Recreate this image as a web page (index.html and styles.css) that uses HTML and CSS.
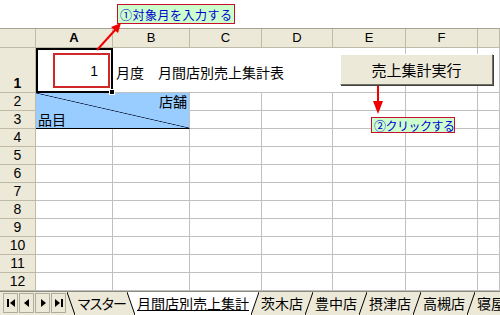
FILE: index.html
```html
<!DOCTYPE html>
<html lang="ja">
<head>
    <meta charset="UTF-8">
    <title>月間店別売上集計</title>
    <link rel="stylesheet" href="styles.css">
</head>
<body>
    <div class="top"></div>

    <!-- Sheet grid -->
    <div class="sheet">
        <div class="ch"></div><div class="ch on">A</div><div class="ch">B</div><div class="ch">C</div><div class="ch">D</div><div class="ch">E</div><div class="ch">F</div><div class="ch"></div>

        <div class="rh on">1</div>
        <div class="c a1"><div class="box">1</div></div>
        <div class="c title">月度　月間店別売上集計表</div>
        <div class="c"></div><div class="c"></div><div class="c"></div>

        <div class="rh">2</div>
        <div class="c diag"><span class="shop">店舗</span><span class="item">品目</span></div>
        <div class="c"></div><div class="c"></div><div class="c"></div><div class="c"></div><div class="c"></div>

        <div class="rh">3</div>
        <div class="c"></div><div class="c"></div><div class="c"></div><div class="c"></div><div class="c"></div>

        <div class="rh">4</div><div class="c"></div><div class="c"></div><div class="c"></div><div class="c"></div><div class="c"></div><div class="c"></div><div class="c"></div>
        <div class="rh">5</div><div class="c"></div><div class="c"></div><div class="c"></div><div class="c"></div><div class="c"></div><div class="c"></div><div class="c"></div>
        <div class="rh">6</div><div class="c"></div><div class="c"></div><div class="c"></div><div class="c"></div><div class="c"></div><div class="c"></div><div class="c"></div>
        <div class="rh">7</div><div class="c"></div><div class="c"></div><div class="c"></div><div class="c"></div><div class="c"></div><div class="c"></div><div class="c"></div>
        <div class="rh">8</div><div class="c"></div><div class="c"></div><div class="c"></div><div class="c"></div><div class="c"></div><div class="c"></div><div class="c"></div>
        <div class="rh">9</div><div class="c"></div><div class="c"></div><div class="c"></div><div class="c"></div><div class="c"></div><div class="c"></div><div class="c"></div>
        <div class="rh">10</div><div class="c"></div><div class="c"></div><div class="c"></div><div class="c"></div><div class="c"></div><div class="c"></div><div class="c"></div>
        <div class="rh">11</div><div class="c"></div><div class="c"></div><div class="c"></div><div class="c"></div><div class="c"></div><div class="c"></div><div class="c"></div>
        <div class="rh">12</div><div class="c"></div><div class="c"></div><div class="c"></div><div class="c"></div><div class="c"></div><div class="c"></div><div class="c"></div>
    </div>

    <!-- Sheet tabs -->
    <div class="tabs">
        <div class="nav">
            <span class="nb"><svg width="8" height="8"><rect x="0" y="0" width="2" height="8"/><polygon points="8,0 8,8 3,4"/></svg></span>
            <span class="nb"><svg width="8" height="8"><polygon points="6,0 6,8 1,4"/></svg></span>
            <span class="nb"><svg width="8" height="8"><polygon points="2,0 2,8 7,4"/></svg></span>
            <span class="nb"><svg width="8" height="8"><polygon points="0,0 0,8 5,4"/><rect x="6" y="0" width="2" height="8"/></svg></span>
        </div>
        <svg class="sep" width="8" height="23"><line x1="0" y1="0" x2="8" y2="23"/></svg>
        <span class="tab kana">マスター</span>
        <svg class="sep" width="8" height="23"><polygon class="fill" points="0,0 8,0 8,23"/><line x1="0" y1="0" x2="8" y2="23"/></svg>
        <span class="tab on">月間店別売上集計</span>
        <svg class="sep" width="8" height="23"><polygon class="fill" points="0,0 8,0 0,23"/><line x1="8" y1="0" x2="0" y2="23"/></svg>
        <span class="tab">茨木店</span>
        <svg class="sep" width="8" height="23"><line x1="8" y1="0" x2="0" y2="23"/></svg>
        <span class="tab">豊中店</span>
        <svg class="sep" width="8" height="23"><line x1="8" y1="0" x2="0" y2="23"/></svg>
        <span class="tab">摂津店</span>
        <svg class="sep" width="8" height="23"><line x1="8" y1="0" x2="0" y2="23"/></svg>
        <span class="tab">高槻店</span>
        <svg class="sep" width="8" height="23"><line x1="8" y1="0" x2="0" y2="23"/></svg>
        <span class="tab last">寝屋</span>
    </div>

    <!-- Things drawn over the sheet -->
    <div class="run">売上集計実行</div>
    <div class="note note1">①対象月を入力する</div>
    <div class="note note2">②クリックする</div>

    <svg class="arrows" width="500" height="315">
        <line x1="97" y1="50" x2="116" y2="29"/>
        <polygon points="121,23 118,33 111,27"/>
        <line x1="378" y1="86" x2="378" y2="103"/>
        <polygon points="373,101 383,101 378,114"/>
    </svg>
</body>
</html>
```

FILE: styles.css
```css
/* Page */
html, body {
    margin: 0;
    width: 500px;
    height: 315px;
    overflow: hidden;
}

body {
    position: relative;
    background: #fff;
    font-family: "Liberation Sans", "Noto Sans CJK JP", sans-serif;
    color: #000;
}

.top {
    height: 28px;
}

/* Grid of cells */
.sheet {
    display: grid;
    grid-template-columns: 36px 77px 77px 72px 71px 73px 72px 22px;
    grid-template-rows: 19px 45px repeat(11, 18px);
    width: 500px;
    border-top: 1px solid #a6a394;
}

.sheet > div {
    box-sizing: border-box;
    border-right: 1px solid #c0c0c0;
    border-bottom: 1px solid #c0c0c0;
}

.ch, .rh {
    background: #ece9d8;
    border-right-color: #bdbaa8 !important;
    border-bottom-color: #bdbaa8 !important;
}

.ch {
    font-size: 13px;
    text-align: center;
    line-height: 18px;
}

.rh {
    font-size: 14px;
    display: flex;
    align-items: flex-end;
    justify-content: center;
    line-height: 17px;
}

.on {
    font-weight: bold;
}

/* Active cell A1 */
.a1 {
    position: relative;
    z-index: 2;
    padding: 5px 2px 4px 17px;
    outline: 2px solid #000;
    outline-offset: -2px;
}

.a1::after {
    content: "";
    position: absolute;
    right: -3px;
    bottom: -3px;
    width: 4px;
    height: 4px;
    background: #000;
    border: 1px solid #fff;
}

.box {
    box-sizing: border-box;
    height: 100%;
    border: 2px solid #d02828;
    display: flex;
    align-items: center;
    justify-content: flex-end;
    padding-right: 10px;
    font-size: 14px;
}

.title {
    grid-column: span 3;
    display: flex;
    align-items: center;
    padding: 3px 0 0 3px;
    font-family: "Noto Sans CJK JP", sans-serif;
    font-size: 14px;
    border-right: none !important;
}

/* Merged A2:B3 with the diagonal */
.diag {
    grid-column: span 2;
    grid-row: span 2;
    display: flex;
    flex-direction: column;
    justify-content: space-between;
    padding: 0 2px 0 2px;
    border-bottom-color: #000 !important;
    background: linear-gradient(to top right, #99ccff calc(50% - 0.7px), #102040 50%, #99ccff calc(50% + 0.7px));
    font-family: "Noto Sans CJK JP", sans-serif;
    font-size: 14px;
    line-height: 17px;
}

.shop {
    text-align: right;
}

/* Sheet tabs */
.tabs {
    display: flex;
    box-sizing: border-box;
    height: 24px;
    background: #ece9d8;
    border-top: 1px solid #8c8a7e;
    font-family: "Noto Sans CJK JP", sans-serif;
    font-size: 14px;
    white-space: nowrap;
}

.nav {
    display: flex;
    gap: 1px;
    padding: 1px 1px 2px 3px;
}

.nb {
    box-sizing: border-box;
    width: 15px;
    display: flex;
    align-items: center;
    justify-content: center;
    border: 1px solid #b0ad9e;
}

.nb svg {
    fill: #000;
}

.sep {
    flex: none;
}

.sep line {
    stroke: #000;
    stroke-width: 1;
}

.sep .fill {
    fill: #fff;
}

.tab {
    padding: 0 2px;
    line-height: 22px;
}

.tab.kana {
    letter-spacing: -2px;
}

.tab.on {
    background: #fff;
    font-weight: normal;
    text-decoration: underline;
}

/* Button and callouts */
.run {
    position: absolute;
    left: 340px;
    top: 54px;
    width: 153px;
    height: 31px;
    box-sizing: border-box;
    display: flex;
    align-items: center;
    justify-content: center;
    background: #ece9d8;
    border: 1px solid;
    border-color: #fff #716f64 #716f64 #fff;
    box-shadow: 1px 1px 0 #404040;
    font-family: "Noto Sans CJK JP", sans-serif;
    font-size: 15px;
}

.note {
    position: absolute;
    box-sizing: border-box;
    display: flex;
    align-items: center;
    padding-left: 2px;
    background: #ccffcc;
    border: 1px solid #c8102e;
    color: #0000d0;
    font-family: "Noto Sans CJK JP", sans-serif;
    font-size: 12px;
    white-space: nowrap;
}

.note1 {
    left: 117px;
    top: 4px;
    width: 118px;
    height: 20px;
    letter-spacing: 0.5px;
}

.note2 {
    left: 371px;
    top: 117px;
    width: 84px;
    height: 16px;
    letter-spacing: -0.5px;
}

.arrows {
    position: absolute;
    left: 0;
    top: 0;
    z-index: 5;
    pointer-events: none;
}

.arrows line {
    stroke: #f00000;
    stroke-width: 2;
}

.arrows polygon {
    fill: #f00000;
}
```
